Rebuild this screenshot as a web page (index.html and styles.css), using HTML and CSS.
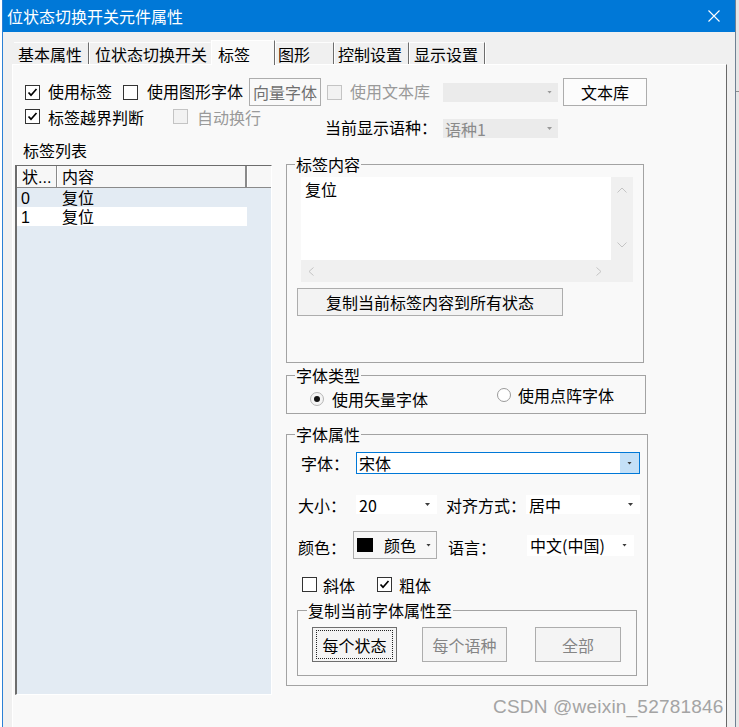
FILE: index.html
```html
<!DOCTYPE html>
<html lang="zh-CN">
<head>
    <meta charset="UTF-8">
    <meta name="viewport" content="width=device-width, initial-scale=1.0">
    <title>位状态切换开关元件属性</title>
    <link rel="stylesheet" href="styles.css">
</head>
<body>
<div class="edge-left"></div>

<div class="window">
    <div class="titlebar">
        <span class="title">位状态切换开关元件属性</span>
        <svg class="close" width="12" height="12" viewBox="0 0 12 12"><path d="M0.5 0.5 L11.5 11.5 M11.5 0.5 L0.5 11.5" stroke="#fff" stroke-width="1.1" fill="none"/></svg>
    </div>

    <!-- tab strip -->
    <div class="tabs">
        <div class="tab tab-basic">基本属性</div>
        <div class="tab tab-switch">位状态切换开关</div>
        <div class="tab tab-label active">标签</div>
        <div class="tab tab-shape">图形</div>
        <div class="tab tab-ctrl">控制设置</div>
        <div class="tab tab-disp">显示设置</div>
    </div>

    <div class="panel">
        <!-- first option row -->
        <div class="opt-row1">
            <span class="cb cb-first"><svg width="11" height="11" viewBox="0 0 11 11"><path d="M1.5 5.5 L4 8.2 L9.5 2" stroke="#000" stroke-width="1.7" fill="none"/></svg></span>
            <span class="txt txt-use">使用标签</span>
            <span class="cb cb-gfont"></span>
            <span class="txt txt-gfont">使用图形字体</span>
            <span class="btn btn-vector">向量字体</span>
            <span class="cb off cb-lib"></span>
            <span class="txt dim txt-lib">使用文本库</span>
            <span class="combo off combo-lib"><span class="combo-text"></span><span class="arrow"></span></span>
            <span class="btn btn-lib">文本库</span>
        </div>

        <!-- second option row -->
        <div class="opt-row2">
            <span class="cb cb-first cb-row2"><svg width="11" height="11" viewBox="0 0 11 11"><path d="M1.5 5.5 L4 8.2 L9.5 2" stroke="#000" stroke-width="1.7" fill="none"/></svg></span>
            <span class="txt txt-bound">标签越界判断</span>
            <span class="cb off cb-wrap"></span>
            <span class="txt dim txt-wrap">自动换行</span>
            <span class="txt txt-lang">当前显示语种：</span>
            <span class="combo off combo-lang"><span class="combo-text">语种1</span><span class="arrow"></span></span>
        </div>

        <div class="main">
            <!-- label list -->
            <div class="list-col">
                <div class="list-title">标签列表</div>
                <div class="list">
                    <div class="list-head">
                        <span class="hcell hc-state">状...</span>
                        <span class="hcell hc-text">内容</span>
                        <span class="hcell hc-rest"></span>
                    </div>
                    <div class="list-row">
                        <span class="c-state">0</span><span class="c-text">复位</span>
                    </div>
                    <div class="list-row white">
                        <span class="c-state">1</span><span class="c-text">复位</span>
                    </div>
                </div>
            </div>

            <!-- properties -->
            <div class="prop-col">
                <fieldset class="group g-content">
                    <legend>标签内容</legend>
                    <div class="edit">
                        <div class="edit-text">复位</div>
                        <div class="vscroll">
                            <svg width="10" height="6" viewBox="0 0 10 6"><polyline points="0.5,5.5 5,1 9.5,5.5" stroke="#c4c4c4" fill="none"/></svg>
                            <svg width="10" height="6" viewBox="0 0 10 6"><polyline points="0.5,0.5 5,5 9.5,0.5" stroke="#c4c4c4" fill="none"/></svg>
                        </div>
                        <div class="hscroll">
                            <svg width="6" height="9" viewBox="0 0 6 9"><polyline points="5.5,0.5 1,4.5 5.5,8.5" stroke="#c4c4c4" fill="none"/></svg>
                            <svg width="6" height="9" viewBox="0 0 6 9"><polyline points="0.5,0.5 5,4.5 0.5,8.5" stroke="#c4c4c4" fill="none"/></svg>
                        </div>
                        <div class="corner"></div>
                    </div>
                    <div class="btn btn-copy">复制当前标签内容到所有状态</div>
                </fieldset>

                <fieldset class="group g-type">
                    <legend>字体类型</legend>
                    <div class="radio-row">
                        <span class="radio-item r-vector"><span class="radio on"><span class="dot"></span></span><span class="txt">使用矢量字体</span></span>
                        <span class="radio-item r-bitmap"><span class="radio"></span><span class="txt">使用点阵字体</span></span>
                    </div>
                </fieldset>

                <fieldset class="group g-font">
                    <legend>字体属性</legend>
                    <div class="f-row f-name">
                        <span class="lb lb-name">字体：</span>
                        <span class="combo-font"><span class="combo-text">宋体</span><span class="drop"><span class="arrow"></span></span></span>
                    </div>
                    <div class="f-row f-size">
                        <span class="lb lb-size">大小：</span>
                        <span class="combo combo-size"><span class="combo-text">20</span><span class="arrow"></span></span>
                        <span class="lb lb-align">对齐方式：</span>
                        <span class="combo combo-align"><span class="combo-text">居中</span><span class="arrow"></span></span>
                    </div>
                    <div class="f-row f-color">
                        <span class="lb lb-color">颜色：</span>
                        <span class="colorbtn"><span class="swatch"></span><span class="swatch-text">颜色</span><span class="arrow"></span></span>
                        <span class="lb lb-lang">语言：</span>
                        <span class="combo combo-lang2"><span class="combo-text">中文(中国)</span><span class="arrow"></span></span>
                    </div>
                    <div class="f-row f-style">
                        <span class="cb cb-italic"></span>
                        <span class="txt txt-italic">斜体</span>
                        <span class="cb cb-bold"><svg width="11" height="11" viewBox="0 0 11 11"><path d="M1.5 5.5 L4 8.2 L9.5 2" stroke="#000" stroke-width="1.7" fill="none"/></svg></span>
                        <span class="txt txt-bold">粗体</span>
                    </div>

                    <fieldset class="group g-copy">
                        <legend>复制当前字体属性至</legend>
                        <div class="copy-row">
                            <span class="btn btn-state"><span class="focus">每个状态</span></span>
                            <span class="btn dim btn-lang">每个语种</span>
                            <span class="btn dim btn-all">全部</span>
                        </div>
                    </fieldset>
                </fieldset>
            </div>
        </div>
    </div>
</div>

<div class="edge-right"><div class="edge-line"></div></div>

<div class="watermark">CSDN @weixin_52781846</div>
</body>
</html>
```

FILE: styles.css
```css
* {
    box-sizing: border-box;
}
body {
    margin: 0;
    width: 739px;
    height: 727px;
    overflow: hidden;
    display: flex;
    position: relative;
    background: #fff;
    font-family: "Noto Sans CJK SC", "Liberation Sans", sans-serif;
    font-size: 16px;
    line-height: 16px;
    color: #000;
}
.edge-left {
    width: 2px;
    flex: none;
}
.edge-right {
    flex: 1;
    background: #e6e6e6;
}
.edge-line {
    margin-top: 91px;
    height: 1px;
    background: #8e8e8e;
}
.window {
    width: 734px;
    height: 727px;
    flex: none;
    display: flex;
    flex-direction: column;
    background: #f0f0f0;
    border-left: 1px solid #2b80d5;
    border-right: 1px solid #6f8193;
}
.titlebar {
    height: 32px;
    flex: none;
    display: flex;
    align-items: center;
    justify-content: space-between;
    padding: 0 15px 1px 4px;
    background: #0078d7;
    color: #fff;
}
.close {
    display: block;
}

/* tabs */
.tabs {
    height: 22px;
    flex: none;
    margin-top: 10px;
    padding-left: 11px;
    display: flex;
    position: relative;
    z-index: 1;
}
.tab {
    height: 22px;
    padding-top: 3px;
    border-top: 1px solid #fdfdfd;
    border-right: 1px solid #6d6d6d;
    box-shadow: 1px 0 0 #fff;
    white-space: nowrap;
}
.tab-basic { width: 75px; padding-left: 4px; }
.tab-switch { width: 122px; padding-left: 6px; border-right-color: transparent; box-shadow: none; }
.tab-label {
    width: 64px;
    height: 25px;
    margin-top: -2px;
    padding-left: 6px;
    padding-top: 5px;
    background: #f9f9f9;
    border-left: 1px solid #fff;
    border-top: 1px solid #fff;
}
.tab-shape { width: 59px; padding-left: 3px; }
.tab-ctrl { width: 75px; padding-left: 4px; }
.tab-disp { width: 76px; padding-left: 5px; }

.panel {
    flex: 1;
    width: 715px;
    margin-left: 9px;
    background: #f9f9f9;
    border-top: 1px solid #fff;
    border-left: 1px solid #fff;
    border-right: 1px solid #696969;
}

/* generic controls */
.txt {
    white-space: nowrap;
}
.dim {
    color: #9a9a9a;
}
.cb {
    width: 15px;
    height: 15px;
    flex: none;
    border: 1px solid #333;
    background: #fff;
    display: flex;
    align-items: center;
    justify-content: center;
}
.cb.off {
    border-color: #c4c4c4;
    background: #f2f2f2;
}
.cb svg {
    display: block;
}
.btn {
    display: flex;
    align-items: center;
    justify-content: center;
    flex: none;
    border: 1px solid #adadad;
    background: #f6f6f6;
    white-space: nowrap;
}
.combo {
    display: flex;
    align-items: center;
    flex: none;
    height: 19px;
    padding: 0 7px 0 3px;
    background: #fff;
}
.combo.off {
    background: #ebebeb;
    color: #8a8a8a;
    padding: 0 6px 0 2px;
}
.combo-text {
    flex: 1;
    white-space: nowrap;
}
.arrow {
    width: 5px;
    height: 3px;
    flex: none;
    background: #3c3c3c;
    clip-path: polygon(0 0, 100% 0, 50% 100%);
}
.combo.off .arrow {
    background: #9a9a9a;
}

/* option rows */
.opt-row1 {
    height: 28px;
    margin-top: 13px;
    display: flex;
    align-items: center;
}
.opt-row1 .txt {
    margin-bottom: 2px;
}
.cb-first { margin-left: 12px; }
.txt-use { margin-left: 8px; }
.cb-gfont { margin-left: 11px; }
.txt-gfont { margin-left: 9px; }
.btn-vector {
    margin-left: 6px;
    width: 72px;
    height: 28px;
    color: #707070;
    background: #f9f9f9;
}
.cb-lib { margin-left: 6px; }
.txt-lib { margin-left: 8px; }
.combo-lib { margin-left: 13px; width: 115px; }
.btn-lib {
    margin-left: 5px;
    width: 84px;
    height: 28px;
    background: #fcfcfc;
}

.opt-row2 {
    height: 30px;
    margin-top: 2px;
    display: flex;
    align-items: flex-start;
}
.cb-row2 { margin-top: 1px; }
.txt-bound { margin-left: 8px; margin-top: 1px; }
.cb-wrap { margin-left: 29px; margin-top: 1px; }
.txt-wrap { margin-left: 9px; margin-top: 1px; }
.txt-lang { margin-left: 64px; margin-top: 11px; }
.combo-lang { margin-left: 6px; margin-top: 11px; width: 115px; }

/* main area */
.main {
    display: flex;
    align-items: flex-start;
}
.list-col {
    width: 257px;
    margin-left: 2px;
}
.list-title {
    margin: 4px 0 0 8px;
}
.list {
    margin-top: 7px;
    height: 530px;
    background: #e3ebf3;
    border-left: 2px solid #6d6d6d;
    border-top: 1px solid #6d6d6d;
    border-right: 1px solid #fff;
    border-bottom: 1px solid #fff;
    font-family: "Liberation Sans", "Noto Sans CJK SC", sans-serif;
}
.list-head {
    height: 22px;
    display: flex;
    background: #f7f7f7;
    border-bottom: 1px solid #8a8a8a;
}
.hcell {
    height: 21px;
    padding-top: 4px;
    border-left: 1px solid #fff;
    border-right: 1px solid #8a8a8a;
}
.hc-state { width: 40px; padding-left: 4px; }
.hc-text { width: 190px; padding-left: 4px; border-right-width: 2px; }
.hc-rest { flex: 1; border-right: none; }
.list-row {
    height: 19px;
    width: 230px;
    padding-top: 2px;
    display: flex;
    align-items: center;
}
.list-row.white {
    background: #fff;
}
.c-state {
    width: 40px;
    padding-left: 4px;
}
.c-text {
    padding-left: 5px;
}

.prop-col {
    margin-left: 14px;
    width: 362px;
}

/* group boxes */
.group {
    margin: 0;
    padding: 0;
    min-width: 0;
    border: 1px solid #a3a3a3;
}
.group legend {
    margin-left: 8px;
    padding: 0 1px;
    line-height: 16px;
}
.g-content {
    width: 358px;
    margin-top: 18px;
    padding-bottom: 46px;
}
.edit {
    margin: 5px 0 0 14px;
    width: 332px;
    height: 105px;
    display: grid;
    grid-template-columns: 310px 22px;
    grid-template-rows: 83px 22px;
    background: #f0f0f0;
}
.edit-text {
    background: #fff;
    padding: 4px 0 0 4px;
}
.vscroll {
    display: flex;
    flex-direction: column;
    align-items: center;
    justify-content: space-between;
    padding: 10px 0 12px;
}
.hscroll {
    display: flex;
    align-items: center;
    justify-content: space-between;
    padding: 0 9px 0 7px;
}
.vscroll svg, .hscroll svg {
    display: block;
}
.btn-copy {
    margin: 6px 0 0 10px;
    width: 266px;
    height: 28px;
    background: #f3f3f3;
}

.g-type {
    width: 360px;
    margin-top: 4px;
    padding-bottom: 5px;
}
.radio-row {
    margin-top: 4px;
    height: 21px;
    display: flex;
    align-items: flex-start;
}
.radio-item {
    display: flex;
    align-items: center;
}
.r-vector { margin: 4px 0 0 23px; }
.r-vector .txt { margin-left: 8px; }
.r-bitmap { margin-left: 69px; }
.r-bitmap .txt { margin-left: 7px; }
.radio {
    width: 14px;
    height: 14px;
    flex: none;
    border: 1px solid #9a9a9a;
    border-radius: 50%;
    background: #fff;
    display: flex;
    align-items: center;
    justify-content: center;
}
.radio.on {
    border-color: #b5b5b5;
    background: #f4f4f4;
}
.dot {
    width: 6px;
    height: 6px;
    border-radius: 50%;
    background: #111;
}

.g-font {
    width: 362px;
    margin-top: 12px;
    padding-bottom: 9px;
}
.f-row {
    display: flex;
    align-items: center;
}
.lb {
    flex: none;
    white-space: nowrap;
}
.f-name { margin-top: 10px; height: 22px; }
.lb-name { margin-left: 14px; width: 55px; }
.combo-font {
    width: 284px;
    height: 22px;
    display: flex;
    align-items: stretch;
    border: 1px solid #0078d7;
    background: #fff;
}
.combo-font .combo-text {
    padding: 2px 0 0 2px;
}
.drop {
    width: 19px;
    display: flex;
    align-items: center;
    justify-content: center;
    background: #c4e0f7;
}
.f-size { margin-top: 21px; height: 19px; }
.lb-size { margin-left: 11px; width: 58px; }
.combo-size { width: 81px; }
.lb-align { margin-left: 9px; width: 80px; }
.combo-align { width: 114px; }
.f-color { margin-top: 17px; height: 28px; }
.lb-color { margin-left: 11px; width: 55px; margin-top: 3px; }
.colorbtn {
    width: 84px;
    height: 28px;
    flex: none;
    display: flex;
    align-items: center;
    padding: 0 5px 0 3px;
    border: 1px solid #adadad;
    background: #f7f7f7;
}
.swatch {
    width: 16px;
    height: 14px;
    background: #000;
}
.swatch-text {
    margin-left: 11px;
    flex: 1;
}
.lb-lang { margin-left: 11px; width: 79px; margin-top: 3px; }
.combo-lang2 { width: 107px; height: 21px; }
.f-style { margin-top: 17px; height: 17px; }
.cb-italic { margin-left: 15px; }
.txt-italic { margin-left: 6px; }
.cb-bold { margin-left: 22px; }
.txt-bold { margin-left: 7px; }

.g-copy {
    width: 340px;
    margin: 9px 0 0 10px;
    padding-bottom: 13px;
}
.g-copy legend {
    margin-left: 9px;
}
.copy-row {
    margin-top: 9px;
    height: 35px;
    display: flex;
}
.copy-row .btn {
    height: 35px;
    background: #f4f4f4;
}
.btn.dim {
    color: #858585;
}
.btn-state {
    margin-left: 14px;
    width: 85px;
    padding: 2px 3px;
    border-color: #6e6e6e;
}
.focus {
    width: 100%;
    height: 100%;
    display: flex;
    align-items: center;
    justify-content: center;
    border: 1px dotted #222;
}
.btn-lang { margin-left: 25px; width: 85px; }
.btn-all { margin-left: 28px; width: 86px; }

.watermark {
    position: absolute;
    left: 493px;
    top: 696px;
    font-family: "Liberation Sans", sans-serif;
    font-size: 19px;
    line-height: 22px;
    letter-spacing: 0.2px;
    color: #a4a4a4;
    white-space: nowrap;
}
```
